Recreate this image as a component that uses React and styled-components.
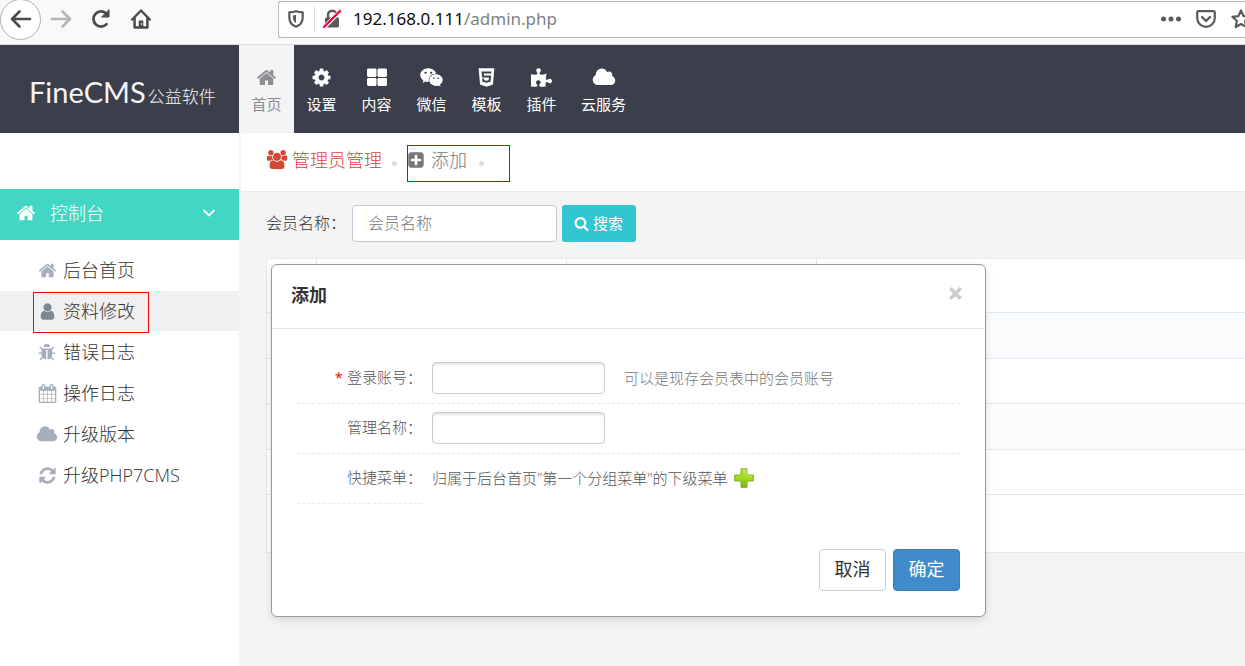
import React from 'react';
import styled, { createGlobalStyle } from 'styled-components';
import { FaWeixin, FaHtml5, FaPuzzlePiece } from 'react-icons/fa';

const dark = '#3b3f4b';
const teal = '#42d6c4';
const line = '#e3e9ee';

const GlobalStyle = createGlobalStyle`
  * { box-sizing: border-box; }
  body {
    margin: 0;
    overflow: hidden;
    background: #f4f4f4;
    font-family: "Open Sans", "Noto Sans CJK SC", sans-serif;
    font-weight: 400;
    color: #666;
  }
  button, input { font: inherit; }
  a { color: inherit; text-decoration: none; }
  svg { display: block; flex: none; }
`;

const paths = {
  home: 'M1472 992v480q0 26-19 45t-45 19h-384v-384h-256v384h-384q-26 0-45-19t-19-45v-480q0-1 .5-3t.5-3l575-474 575 474q1 2 1 6zm223-69l-62 74q-8 9-21 11h-3q-13 0-21-7l-692-577-692 577q-12 8-24 7-13-2-21-11l-62-74q-8-10-7-23.5t11-21.5l719-599q32-26 76-26t76 26l244 204v-195q0-14 9-23t23-9h192q14 0 23 9t9 23v408l219 182q10 8 11 21.5t-7 23.5z',
  user: 'M1536 1399q0 109-62.5 187t-150.5 78h-854q-88 0-150.5-78t-62.5-187q0-85 8.5-160.5t31.5-152 58.5-131 94-89 134.5-34.5q131 128 313 128t313-128q76 0 134.5 34.5t94 89 58.5 131 31.5 152 8.5 160.5zm-256-887q0 159-112.5 271.5t-271.5 112.5-271.5-112.5-112.5-271.5 112.5-271.5 271.5-112.5 271.5 112.5 112.5 271.5z',
  cloud: 'M1984 1152q0 159-112.5 271.5t-271.5 112.5h-1088q-185 0-316.5-131.5t-131.5-316.5q0-132 71-241.5t187-163.5q-2-28-2-43 0-212 150-362t362-150q158 0 286.5 88t187.5 230q70-62 166-62 106 0 181 75t75 181q0 75-41 138 129 30 213 134.5t84 239.5z',
  refresh: 'M1639 1056q0 5-1 7-64 268-268 434.5t-478 166.5q-146 0-282.5-55t-243.5-157l-129 129q-19 19-45 19t-45-19-19-45v-448q0-26 19-45t45-19h448q26 0 45 19t19 45-19 45l-137 137q71 66 161 102t187 36q134 0 250-65t186-179q11-17 53-117 8-23 30-23h192q13 0 22.5 9.5t9.5 22.5zm25-800v448q0 26-19 45t-45 19h-448q-26 0-45-19t-19-45 19-45l138-138q-148-137-349-137-134 0-250 65t-186 179q-11 17-53 117-8 23-30 23h-199q-13 0-22.5-9.5t-9.5-22.5v-7q65-268 270-434.5t480-166.5q146 0 284 55.5t245 156.5l130-129q19-19 45-19t45 19 19 45z',
  search: 'M1216 832q0-185-131.5-316.5t-316.5-131.5-316.5 131.5-131.5 316.5 131.5 316.5 316.5 131.5 316.5-131.5 131.5-316.5zm512 832q0 52-38 90t-90 38q-54 0-90-38l-343-342q-179 124-399 124-143 0-273.5-55.5t-225-150-150-225-55.5-273.5 55.5-273.5 150-225 225-150 273.5-55.5 273.5 55.5 225 150 150 225 55.5 273.5q0 220-124 399l343 343q37 37 37 90z',
  plusSquare: 'M1408 960v-128q0-26-19-45t-45-19h-320v-320q0-26-19-45t-45-19h-128q-26 0-45 19t-19 45v320h-320q-26 0-45 19t-19 45v128q0 26 19 45t45 19h320v320q0 26 19 45t45 19h128q26 0 45-19t19-45v-320h320q26 0 45-19t19-45zm256-544v960q0 119-84.5 203.5t-203.5 84.5h-960q-119 0-203.5-84.5t-84.5-203.5v-960q0-119 84.5-203.5t203.5-84.5h960q119 0 203.5 84.5t84.5 203.5z',
  group: 'M657 896q-162 5-265 128h-134q-82 0-138-40.5t-56-118.5q0-353 124-353 6 0 43.5 21t97.5 42.5 119 21.5q67 0 133-23-5 37-5 66 0 159 90 294zm1071 637q0 120-73 189.5t-194 69.5h-874q-121 0-194-69.5t-73-189.5q0-53 3.5-103.5t14-109 26.5-108.5 43-97.5 62-81 85.5-53.5 111.5-20q10 0 43 21.5t73 48 107 48 135 21.5 135-21.5 107-48 73-48 43-21.5q61 0 111.5 20t85.5 53.5 62 81 43 97.5 26.5 108.5 14 109 3.5 103.5zm-1024-1277q0 106-75 181t-181 75-181-75-75-181 75-181 181-75 181 75 75 181zm704 384q0 159-112.5 271.5t-271.5 112.5-271.5-112.5-112.5-271.5 112.5-271.5 271.5-112.5 271.5 112.5 112.5 271.5zm576 225q0 78-56 118.5t-138 40.5h-134q-103-123-265-128 90-135 90-294 0-29-5-66 66 23 133 23 59 0 119-21.5t97.5-42.5 43.5-21q124 0 124 353zm-128-609q0 106-75 181t-181 75-181-75-75-181 75-181 181-75 181 75 75 181z',
  bug: 'M1632 960q0 26-19 45t-45 19h-224q0 171-67 290l208 209q19 19 19 45t-19 45q-18 19-45 19t-45-19l-198-197q-5 5-15 13t-42 28.5-65 36.5-82 29-97 13v-896h-128v896q-51 0-101.5-13.5t-87-33-66-39-43.5-32.5l-15-14-183 207q-20 21-48 21-24 0-43-16-19-18-20.5-44.5t15.5-46.5l202-227q-58-114-58-274h-224q-26 0-45-19t-19-45 19-45 45-19h224v-294l-173-173q-19-19-19-45t19-45 45-19 45 19l173 173h844l173-173q19-19 45-19t45 19 19 45-19 45l-173 173v294h224q26 0 45 19t19 45zm-480-576h-640q0-133 93.5-226.5t226.5-93.5 226.5 93.5 93.5 226.5z',
  calendar: 'M192 1664h288v-288h-288v288zm352 0h320v-288h-320v288zm-352-352h288v-320h-288v320zm352 0h320v-320h-320v320zm-352-384h288v-288h-288v288zm736 736h320v-288h-320v288zm-384-736h320v-288h-320v288zm768 736h288v-288h-288v288zm-384-352h320v-320h-320v320zm-352-864v-288q0-13-9.5-22.5t-22.5-9.5h-64q-13 0-22.5 9.5t-9.5 22.5v288q0 13 9.5 22.5t22.5 9.5h64q13 0 22.5-9.5t9.5-22.5zm736 864h288v-320h-288v320zm-384-384h320v-288h-320v288zm384 0h288v-288h-288v288zm32-480v-288q0-13-9.5-22.5t-22.5-9.5h-64q-13 0-22.5 9.5t-9.5 22.5v288q0 13 9.5 22.5t22.5 9.5h64q13 0 22.5-9.5t9.5-22.5zm384-64v1280q0 52-38 90t-90 38h-1408q-52 0-90-38t-38-90v-1280q0-52 38-90t90-38h128v-96q0-66 47-113t113-47h64q66 0 113 47t47 113v96h384v-96q0-66 47-113t113-47h64q66 0 113 47t47 113v96h128q52 0 90 38t38 90z',
  cog: 'M1152 896q0-106-75-181t-181-75-181 75-75 181 75 181 181 75 181-75 75-181zm512-109v222q0 12-8 23t-20 13l-185 28q-19 54-39 91 35 50 107 138 10 12 10 25t-9 23q-27 37-99 108t-94 71q-12 0-26-9l-138-108q-44 23-91 38-16 136-29 186-7 28-36 28h-222q-14 0-24.5-8.5t-11.5-21.5l-28-184q-49-16-90-37l-141 107q-10 9-25 9-14 0-25-11-126-114-165-168-7-10-7-23 0-12 8-23 15-21 51-66.5t54-70.5q-27-50-41-99l-183-27q-13-2-21-12.5t-8-23.5v-222q0-12 8-23t19-13l186-28q14-46 39-92-40-57-107-138-10-12-10-24 0-10 9-23 26-36 98.5-107.5t94.5-71.5q13 0 26 10l138 107q44-23 91-38 16-136 29-186 7-28 36-28h222q14 0 24.5 8.5t11.5 21.5l28 184q49 16 90 37l142-107q9-9 24-9 13 0 25 10 129 119 165 170 7 8 7 22 0 12-8 23-15 21-51 66.5t-54 70.5q26 50 41 98l183 28q13 2 21 12.5t8 23.5z'
};

const wide = ['cloud', 'group'];

function Icon({name, size}){
  const box = wide.includes(name) ? 2048 : 1792;
  return (
    <svg width={Math.round(size * box / 1792)} height={size} viewBox={`0 0 ${box} 1792`} fill="currentColor" aria-hidden="true">
      <path d={paths[name]}/>
    </svg>
  )
}

function Blocks(){
  return (
    <svg width="20" height="18" viewBox="0 0 20 18" fill="currentColor" aria-hidden="true">
      <rect x="0" y="0" width="9.5" height="8.4" rx="1.4"/>
      <rect x="10.5" y="0" width="9.5" height="8.4" rx="1.4"/>
      <rect x="0" y="9.4" width="9.5" height="8" rx="1.4"/>
      <rect x="10.5" y="9.4" width="9.5" height="8" rx="1.4"/>
    </svg>
  )
}

/* browser bar */

const BrowserBar = styled.div`
  display: flex;
  align-items: center;
  height: 45px;
  padding-bottom: 6px;
  background: #f9f9fa;
  border-bottom: 1px solid #dcdcdd;
  overflow: hidden;
`;

const BarButton = styled.button`
  display: flex;
  align-items: center;
  justify-content: center;
  width: 40px;
  height: 40px;
  padding: 0;
  border: 0;
  background: none;
  color: ${({$faded}) => $faded ? '#b5b5b7' : '#4a4a4f'};
`;

const BackButton = styled(BarButton)`
  width: 41px;
  height: 41px;
  background: #fff;
  border: 1px solid #b1b1b3;
  border-radius: 50%;
`;

const AddressBox = styled.div`
  flex: 1;
  display: flex;
  align-items: center;
  height: 37px;
  margin-left: 117px;
  border: 1px solid #b9b9bb;
  border-right: 0;
  border-radius: 3px 0 0 3px;
  background: #fff;
  color: #5a5a5e;
`;

const Shield = styled.div`
  display: flex;
  align-items: center;
  height: 26px;
  padding: 0 10px 0 9px;
  margin-right: 7px;
  border-right: 1px solid #dddddf;
`;

const Address = styled.div`
  flex: 1;
  padding-left: 11px;
  font: 400 17px/24px "Noto Sans", sans-serif;
  color: #808084;

  b { font-weight: 400; color: #0c0c0d; }
`;

const BarIcons = styled.div`
  display: flex;
  align-items: center;
  gap: 15px;
`;

/* site header */

const Header = styled.header`
  display: flex;
  height: 88px;
  background: ${dark};
`;

const Logo = styled.a`
  display: flex;
  align-items: baseline;
  gap: 2px;
  width: 239px;
  padding: 29px 0 0 29px;
  font: 400 29px/36px Lato, sans-serif;
  color: #f4f4f6;

  small { font: 300 17px/20px "Noto Sans CJK SC", sans-serif; }
`;

const Nav = styled.nav`
  display: flex;
`;

const NavItem = styled.a`
  display: flex;
  flex-direction: column;
  align-items: center;
  gap: 6px;
  min-width: 55px;
  padding: 22px 12px 0;
  font-size: 15px;
  line-height: 20px;
  color: ${({$active}) => $active ? '#8c8e94' : '#fff'};
  background: ${({$active}) => $active ? '#f4f4f4' : 'none'};

  svg { height: 21px; }
`;

/* sidebar */

const Layout = styled.div`
  display: flex;
  min-height: calc(100vh - 133px);
`;

const Sidebar = styled.aside`
  width: 241px;
  padding-top: 56px;
  background: #fff;
  border-right: 2px solid #f1f5f8;
`;

const MenuHead = styled.a`
  display: flex;
  align-items: center;
  height: 51px;
  padding: 0 23px 3px 16px;
  background: ${teal};
  color: #fff;
  font-size: 18px;
  line-height: 24px;
  font-weight: 300;

  span { flex: 1; padding-left: 14px; }
`;

const Menu = styled.ul`
  display: flex;
  flex-direction: column;
  gap: 1px;
  margin: 0;
  padding: 10px 0;
  list-style: none;
`;

const MenuItem = styled.li`
  position: relative;
  background: ${({$active}) => $active ? '#f0f0f0' : 'none'};

  a {
    display: flex;
    align-items: center;
    height: 40px;
    padding-left: 37px;
    font-size: 18px;
    line-height: 24px;
    font-weight: 300;
    color: #333;
  }
`;

const MenuIcon = styled.span`
  display: flex;
  justify-content: center;
  width: 20px;
  margin-right: 6px;
  color: ${({$active}) => $active ? '#7d8794' : '#a7aebb'};
`;

const Outline = styled.i`
  position: absolute;
  top: ${({$top}) => $top}px;
  left: ${({$left}) => $left}px;
  width: ${({$width}) => $width}px;
  height: ${({$height}) => $height}px;
  border: 1px solid ${({$color}) => $color};
  pointer-events: none;
`;

/* content */

const Main = styled.main`
  flex: 1;
  min-width: 0;
  position: relative;
`;

const Crumbs = styled.div`
  display: flex;
  height: 59px;
  padding: 0 0 5px 25px;
  background: #fff;
  border-bottom: 1px solid #e7ecf1;
`;

const Crumb = styled.a`
  position: relative;
  display: flex;
  align-items: center;
  gap: ${({$gap}) => $gap}px;
  font-size: 18px;
  line-height: 24px;
  font-weight: 300;
  color: ${({$color}) => $color};

  &::after {
    content: '';
    width: 5px;
    height: 5px;
    margin: 8px 10px 0 6px;
    border-radius: 50%;
    background: #dcdcdc;
  }
`;

const SearchForm = styled.form`
  display: flex;
  align-items: center;
  padding: 13px 25px 16px;
  font-size: 16px;
  line-height: 24px;

  label { padding-bottom: 2px; font-weight: 300; color: #333; }
`;

const SearchInput = styled.input`
  width: 205px;
  height: 37px;
  margin: 0 5px 0 6px;
  padding: 0 15px 2px;
  border: 1px solid #c2cad8;
  border-radius: 4px;
  background: #fff;
  font-weight: 300;

  &::placeholder { color: #777; opacity: 1; }
`;

const SearchButton = styled.button`
  display: flex;
  align-items: center;
  gap: 4px;
  height: 37px;
  padding: 0 13px 1px 12px;
  border: 0;
  border-radius: 3px;
  background: #32c5d2;
  color: #fff;
  font-size: 15px;
`;

const Grid = styled.table`
  width: calc(100% - 25px);
  margin-left: 25px;
  table-layout: fixed;
  border-collapse: separate;
  border-spacing: 0;
  border: 1px solid ${line};
  border-right: 0;
  border-radius: 4px 0 0 0;
  background: #fff;

  td, th { padding: 0; border-bottom: 1px solid ${line}; }
  th { height: 54px; border-right: 1px solid ${line}; }
  th:last-child { border-right: 0; }
  td { height: 45px; }
  tr:nth-child(odd) td { height: 46px; background: #fbfcfd; }
  tr:last-child td { height: 57px; border-bottom: 0; background: #fff; }
`;

const Col = styled.col`
  width: ${({$width}) => $width ? `${$width}px` : 'auto'};
`;

/* dialog */

const Dialog = styled.section`
  position: absolute;
  top: 131px;
  left: 30px;
  width: 715px;
  border: 1px solid #999;
  border-radius: 6px;
  background: #fff;
  box-shadow: 0 3px 9px rgba(0, 0, 0, 0.12);
  color: #555;
  font-size: 15px;
  line-height: 20px;
  font-weight: 300;
`;

const DialogHead = styled.div`
  display: flex;
  align-items: center;
  justify-content: space-between;
  height: 64px;
  padding: 0 23px 4px 19px;
  border-bottom: 1px solid #e5e5e5;

  h4 { margin: 0; font-size: 18px; line-height: 24px; font-weight: 700; color: #333; }
`;

const CloseButton = styled.button`
  padding: 0;
  margin-bottom: 2px;
  border: 0;
  background: none;
  color: #ccc;
`;

const DialogBody = styled.div`
  padding: 25px;
`;

const Field = styled.div`
  display: flex;
  align-items: stretch;
  height: 50px;
  border-bottom: ${({$last}) => $last ? '0' : '1px dashed #e7e7e7'};
`;

const FieldLabel = styled.label`
  display: flex;
  align-items: center;
  justify-content: flex-end;
  width: 125px;
  padding-bottom: 4px;
  border-bottom: ${({$last}) => $last ? '1px dashed #e7e7e7' : '0'};

  em { margin-right: 4px; font-style: normal; font-weight: 400; color: #f00; }
`;

const FieldValue = styled.div`
  display: flex;
  align-items: center;
  padding: 0 0 2px 10px;

  svg { margin-left: 6px; }
`;

const TextInput = styled.input`
  width: 173px;
  height: 32px;
  padding: 0 8px;
  border: 1px solid #ccc;
  border-radius: 4px;
  background: #fff;
  box-shadow: inset 0 2px 2px rgba(0, 0, 0, 0.1);
`;

const Hint = styled.span`
  margin-left: 19px;
  color: #777;
`;

const DialogFoot = styled.div`
  display: flex;
  justify-content: flex-end;
  gap: 7px;
  padding: 20px 25px 25px;
`;

const DialogButton = styled.button`
  width: 67px;
  height: 42px;
  padding: 0 0 2px;
  border: 1px solid ${({$primary}) => $primary ? '#357ebd' : '#ccc'};
  border-radius: 4px;
  background: ${({$primary}) => $primary ? '#428bca' : '#fff'};
  color: ${({$primary}) => $primary ? '#fff' : '#333'};
  font-size: 18px;
  line-height: 24px;
  font-weight: 400;
`;

const navItems = [
  { label: '首页', icon: <Icon name="home" size={21}/>, active: true },
  { label: '设置', icon: <Icon name="cog" size={21}/> },
  { label: '内容', icon: <Blocks/> },
  { label: '微信', icon: <FaWeixin size={25}/> },
  { label: '模板', icon: <FaHtml5 size={21}/> },
  { label: '插件', icon: <FaPuzzlePiece size={21}/> },
  { label: '云服务', icon: <Icon name="cloud" size={21}/> }
];

const menuItems = [
  { label: '后台首页', icon: 'home' },
  { label: '资料修改', icon: 'user', active: true },
  { label: '错误日志', icon: 'bug' },
  { label: '操作日志', icon: 'calendar' },
  { label: '升级版本', icon: 'cloud' },
  { label: '升级PHP7CMS', icon: 'refresh' }
];

function Browser(){
  return (
    <BrowserBar>
      <BackButton aria-label="back">
        <svg width="22" height="22" viewBox="0 0 22 22" fill="none" stroke="currentColor" strokeWidth="2.6" strokeLinecap="round" strokeLinejoin="round"><path d="M20 11H2.5M9.5 3.5L2 11l7.5 7.5"/></svg>
      </BackButton>
      <BarButton $faded aria-label="forward">
        <svg width="22" height="22" viewBox="0 0 22 22" fill="none" stroke="currentColor" strokeWidth="2.6" strokeLinecap="round" strokeLinejoin="round"><path d="M2 11h17.5M12.5 3.5L20 11l-7.5 7.5"/></svg>
      </BarButton>
      <BarButton aria-label="reload">
        <svg width="22" height="22" viewBox="0 0 22 22" fill="none" stroke="currentColor" strokeWidth="2.7" strokeLinecap="round"><path d="M16.6 16.2A7.6 7.6 0 1 1 16.4 5.6"/><path d="M19 2v7h-7z" fill="currentColor" strokeWidth="1" strokeLinejoin="round"/></svg>
      </BarButton>
      <BarButton aria-label="home">
        <svg width="22" height="22" viewBox="0 0 22 22" fill="none" stroke="currentColor" strokeWidth="2.5" strokeLinecap="round" strokeLinejoin="round"><path d="M2.2 11.5L11 2.5l8.8 9M4.6 10v9.400h12.800V10"/><path d="M9.3 19v-6h3.4v6z" fill="currentColor" strokeWidth="1.2"/><path d="M11.6 15.5v1" stroke="#fff" strokeWidth="1"/></svg>
      </BarButton>
      <AddressBox>
        <Shield>
          <svg width="16" height="18" viewBox="0 0 16 18" fill="none" stroke="currentColor" strokeWidth="2.2" strokeLinejoin="round"><path d="M8 1.2C6 2 3.5 2.3 1.3 2.4v4.8c0 5 2.6 8 6.7 9.5 4.1-1.500 6.7-4.500 6.7-9.500V2.4C12.5 2.3 10 2 8 1.2z"/><path d="M8 5v8C5.8 11.8 5 9.9 5 7.5V5.4z" fill="currentColor" stroke="none"/></svg>
        </Shield>
        <svg width="20" height="20" viewBox="0 0 20 20" fill="none"><path d="M6 9V6a4.3 4.3 0 0 1 8.6 0v3" stroke="#5a5a5e" strokeWidth="2.4"/><rect x="3" y="8.5" width="14" height="10" rx="1.5" fill="#5a5a5e"/><path d="M1.5 19L18 2.5" stroke="#fff" strokeWidth="4"/><path d="M2 18L18 2" stroke="#ff0039" strokeWidth="2.4" strokeLinecap="round"/></svg>
        <Address><b>192.168.0.111</b>/admin.php</Address>
        <BarIcons>
          <svg width="20" height="6" viewBox="0 0 20 6" fill="currentColor"><circle cx="2.5" cy="3" r="2.5"/><circle cx="10" cy="3" r="2.5"/><circle cx="17.5" cy="3" r="2.5"/></svg>
          <svg width="20" height="18" viewBox="0 0 20 18" fill="none" stroke="currentColor" strokeWidth="2.2" strokeLinecap="round" strokeLinejoin="round"><path d="M2.5 1.2h15q1.3 0 1.3 1.3v5.500a8.8 8.8 0 0 1-17.6 0V2.5q0-1.3 1.3-1.3z"/><path d="M6 7l4 4 4-4" strokeWidth="2.4"/></svg>
          <svg width="14" height="20" viewBox="0 0 14 20" fill="none" stroke="currentColor" strokeWidth="2.2" strokeLinejoin="round"><path d="M10 1.5l2.6 5.6 6 .7-4.5 4.2 1.2 6-5.3-3-5.3 3 1.2-6L1.4 7.800l6-.7z"/></svg>
        </BarIcons>
      </AddressBox>
    </BrowserBar>
  )
}

function AddDialog(){
  return (
    <Dialog role="dialog" aria-label="添加">
      <DialogHead>
        <h4>添加</h4>
        <CloseButton aria-label="close">
          <svg width="13" height="13" viewBox="0 0 13 13" stroke="currentColor" strokeWidth="3.6"><path d="M1.3 1.3l10.4 10.4M11.7 1.3L1.3 11.7"/></svg>
        </CloseButton>
      </DialogHead>
      <DialogBody>
        <Field>
          <FieldLabel htmlFor="account"><em>*</em>登录账号：</FieldLabel>
          <FieldValue>
            <TextInput id="account" type="text"/>
            <Hint>可以是现存会员表中的会员账号</Hint>
          </FieldValue>
        </Field>
        <Field>
          <FieldLabel htmlFor="realname">管理名称：</FieldLabel>
          <FieldValue><TextInput id="realname" type="text"/></FieldValue>
        </Field>
        <Field $last>
          <FieldLabel as="div" $last>快捷菜单：</FieldLabel>
          <FieldValue>
            归属于后台首页"第一个分组菜单"的下级菜单
            <svg width="20" height="20" viewBox="0 0 20 20">
              <defs>
                <linearGradient id="plus" x1="0" y1="0" x2="0" y2="1">
                  <stop offset="0" stopColor="#b5e04a"/>
                  <stop offset="0.5" stopColor="#a4dc1e"/>
                  <stop offset="1" stopColor="#7fae1c"/>
                </linearGradient>
              </defs>
              <path d="M7 .8h6V7h6.300v6H13v6.300H7V13H.7V7H7z" fill="url(#plus)" stroke="#82b01f" strokeWidth="1"/>
              <path d="M8 2h4v6h6" fill="none" stroke="#cdf06e" strokeWidth="1" opacity="0.8"/>
            </svg>
          </FieldValue>
        </Field>
      </DialogBody>
      <DialogFoot>
        <DialogButton>取消</DialogButton>
        <DialogButton $primary>确定</DialogButton>
      </DialogFoot>
    </Dialog>
  )
}

export default function App(){
  return (
    <>
      <GlobalStyle/>
      <Browser/>
      <Header>
        <Logo href="#">FineCMS<small>公益软件</small></Logo>
        <Nav>
          {navItems.map(({label, icon, active}) => (
            <NavItem key={label} href="#" $active={active}>{icon}{label}</NavItem>
          ))}
        </Nav>
      </Header>
      <Layout>
        <Sidebar>
          <MenuHead href="#">
            <Icon name="home" size={20}/>
            <span>控制台</span>
            <svg width="14" height="14" viewBox="0 0 14 14" fill="none" stroke="currentColor" strokeWidth="1.8"><path d="M1.5 4L7 9.5 12.5 4"/></svg>
          </MenuHead>
          <Menu>
            {menuItems.map(({label, icon, active}) => (
              <MenuItem key={label} $active={active}>
                <a href="#"><MenuIcon $active={active}><Icon name={icon} size={19}/></MenuIcon>{label}</a>
                {active && <Outline $top={1} $left={33} $width={116} $height={41} $color="#f00"/>}
              </MenuItem>
            ))}
          </Menu>
        </Sidebar>
        <Main>
          <Crumbs>
            <Crumb href="#" $color="#d64635" $gap={4}><Icon name="group" size={19}/>管理员管理</Crumb>
            <Crumb href="#" $color="#777" $gap={6}>
              <Icon name="plusSquare" size={18}/>添加
              <Outline $top={12} $left={0} $width={103} $height={37} $color="#e00000"/>
            </Crumb>
          </Crumbs>
          <SearchForm>
            <label htmlFor="keyword">会员名称：</label>
            <SearchInput id="keyword" type="text" placeholder="会员名称"/>
            <SearchButton type="button"><Icon name="search" size={15}/>搜索</SearchButton>
          </SearchForm>
          <Grid>
            <colgroup>
              <Col $width={50}/>
              <Col $width={250}/>
              <Col $width={250}/>
              <Col/>
            </colgroup>
            <thead>
              <tr><th/><th/><th/><th/></tr>
            </thead>
            <tbody>
              {[1, 2, 3, 4, 5].map(row => <tr key={row}><td colSpan="4"/></tr>)}
            </tbody>
          </Grid>
          <AddDialog/>
        </Main>
      </Layout>
    </>
  )
}
